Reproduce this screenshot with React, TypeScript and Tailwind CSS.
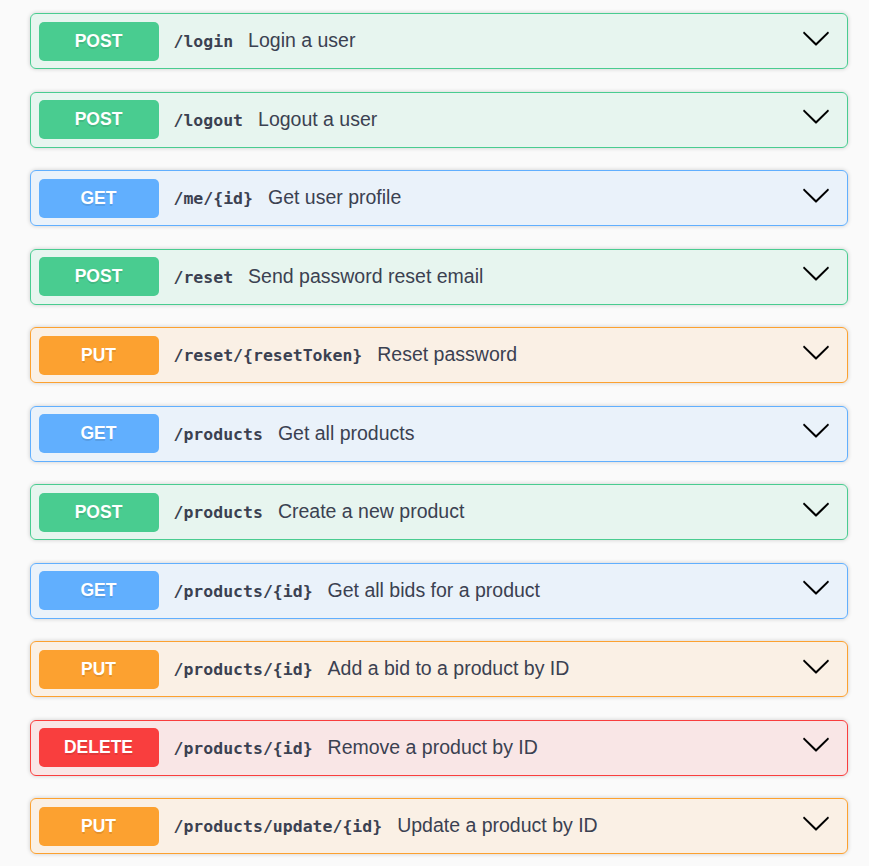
import React from 'react';

type Method = 'GET' | 'POST' | 'PUT' | 'DELETE';

const endpoints: { method: Method; path: string; summary: string }[] = [
    { method: 'POST', path: '/login', summary: 'Login a user' },
    { method: 'POST', path: '/logout', summary: 'Logout a user' },
    { method: 'GET', path: '/me/{id}', summary: 'Get user profile' },
    { method: 'POST', path: '/reset', summary: 'Send password reset email' },
    { method: 'PUT', path: '/reset/{resetToken}', summary: 'Reset password' },
    { method: 'GET', path: '/products', summary: 'Get all products' },
    { method: 'POST', path: '/products', summary: 'Create a new product' },
    { method: 'GET', path: '/products/{id}', summary: 'Get all bids for a product' },
    { method: 'PUT', path: '/products/{id}', summary: 'Add a bid to a product by ID' },
    { method: 'DELETE', path: '/products/{id}', summary: 'Remove a product by ID' },
    { method: 'PUT', path: '/products/update/{id}', summary: 'Update a product by ID' },
];

const styles: Record<Method, { block: string; badge: string }> = {
    GET: { block: 'border-[#61affe] bg-[#61affe]/10', badge: 'bg-[#61affe]' },
    POST: { block: 'border-[#49cc90] bg-[#49cc90]/10', badge: 'bg-[#49cc90]' },
    PUT: { block: 'border-[#fca130] bg-[#fca130]/10', badge: 'bg-[#fca130]' },
    DELETE: { block: 'border-[#f93e3e] bg-[#f93e3e]/10', badge: 'bg-[#f93e3e]' },
};

function Chevron() {
    return (
        <svg width="30" height="30" viewBox="0 0 20 20" className="mb-[7px] mr-[16px] shrink-0 fill-black">
            <path d="M17.418 6.109c.272-.268.709-.268.979 0s.271.701 0 .969l-7.908 7.83c-.27.268-.707.268-.979 0l-7.908-7.83c-.27-.268-.27-.701 0-.969.271-.268.709-.268.979 0L10 13.25l7.418-7.141z" />
        </svg>
    );
}

export default function App() {
    return (
        <div className="min-h-screen bg-[#fafafa] pt-[13px] pl-[30px]">
            {endpoints.map((e, i) => (
                <div
                    key={i}
                    className={`mb-[22.5px] flex h-[56px] w-[818px] items-center rounded-[6px] border pl-[7.5px] shadow-[0_0_4px_rgba(0,0,0,0.19)] ${styles[e.method].block}`}
                >
                    <span
                        className={`flex h-[39px] w-[120px] shrink-0 items-center justify-center rounded-[5px] text-[17.5px] font-bold text-white [font-family:'Liberation_Sans',Arial,sans-serif] [text-shadow:0_1.5px_0_rgba(0,0,0,0.1)] ${styles[e.method].badge}`}
                    >
                        {e.method}
                    </span>
                    <div className="flex flex-1 items-baseline">
                        <span className="ml-[15px] text-[16.5px] font-bold text-[#3b4151] [font-family:'DejaVu_Sans_Mono',monospace]">
                            {e.path}
                        </span>
                        <span className="ml-[15px] text-[19.5px] text-[#3b4151] [font-family:'Liberation_Sans',Arial,sans-serif]">
                            {e.summary}
                        </span>
                    </div>
                    <Chevron />
                </div>
            ))}
        </div>
    );
}
